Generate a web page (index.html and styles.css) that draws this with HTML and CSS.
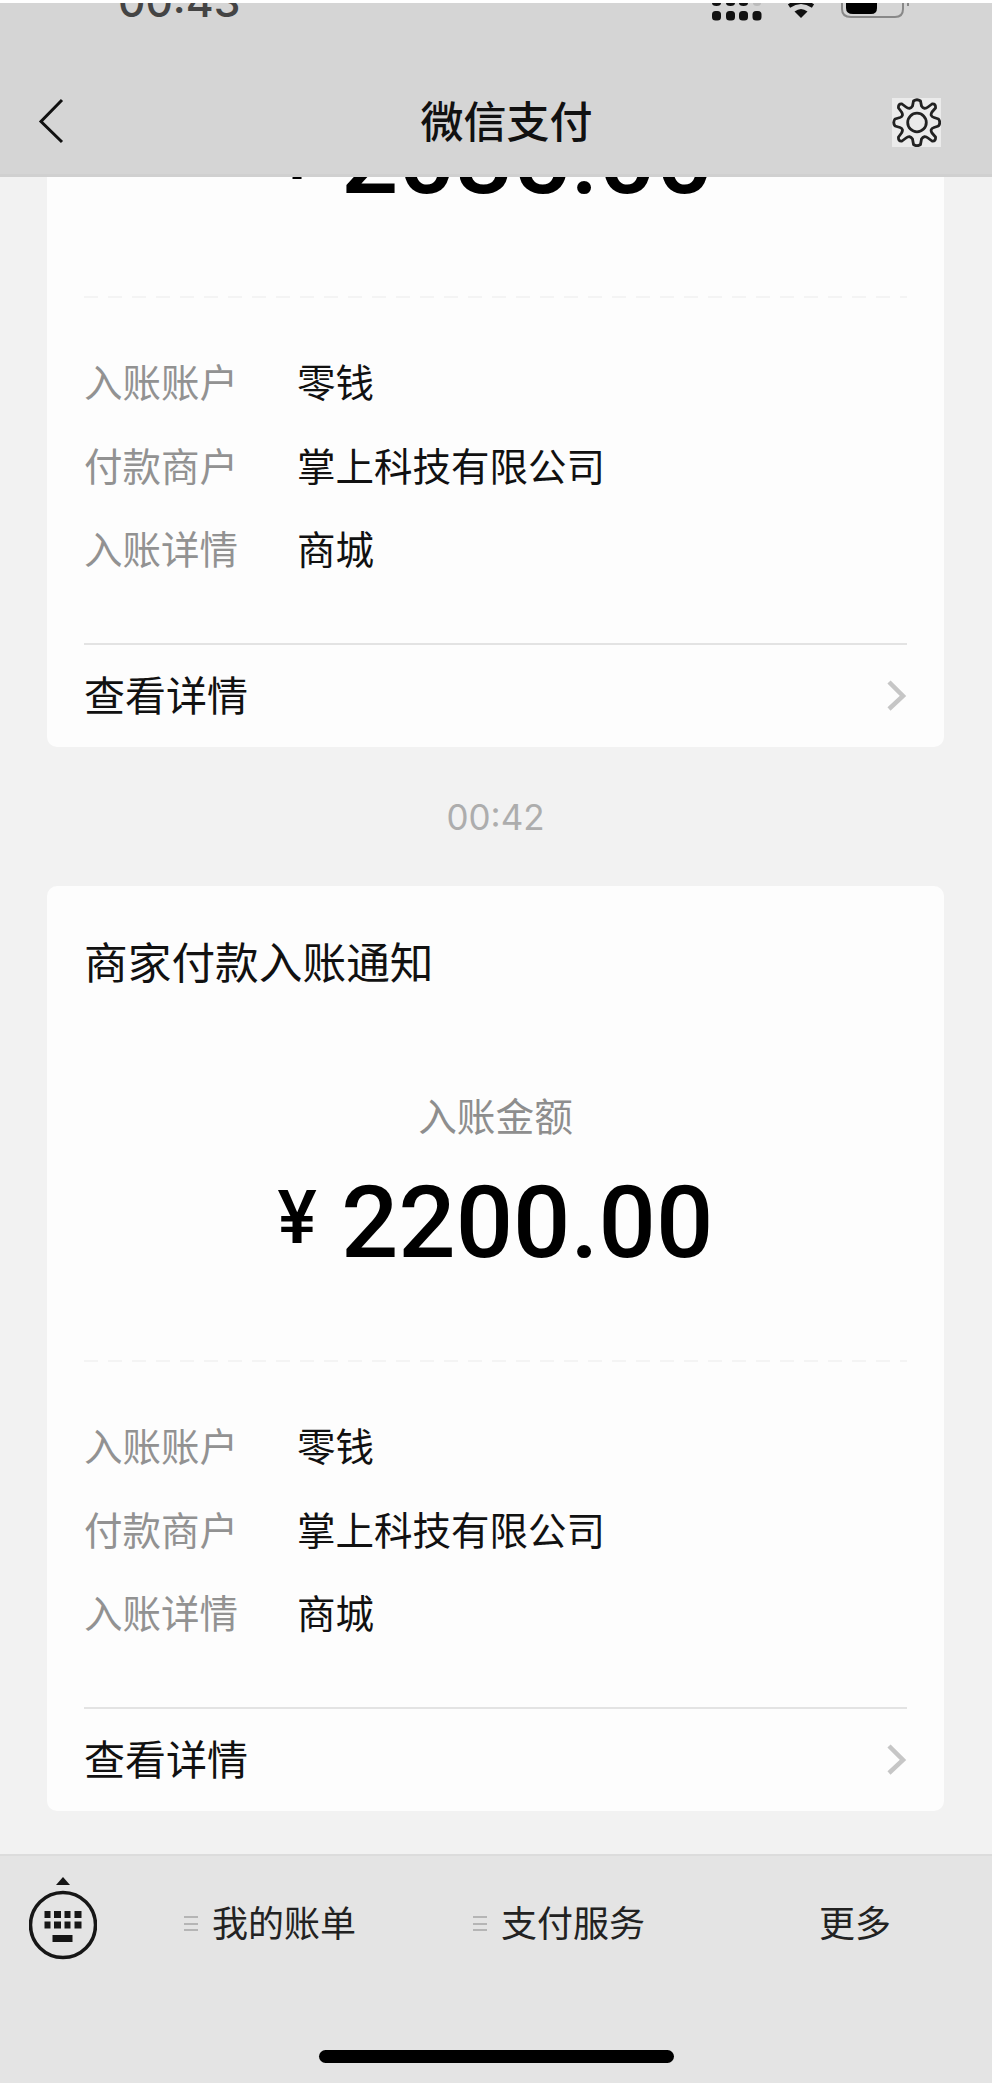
FILE: index.html
```
<!DOCTYPE html>
<html lang="zh-CN">
<head>
<meta charset="utf-8">
<title>微信支付</title>
<link rel="stylesheet" href="styles.css">
</head>
<body>
<div class="phone">
  <header class="header">
    <div class="status">
      <span class="clock">00:43</span>
      <svg class="status-icons" width="210" height="24" viewBox="0 0 210 24">
        <g fill="#111">
          <path d="M2 0h9a4.500 3 0 0 1-9 0zM16 0h9a4.500 3 0 0 1-9 0zM29 0h9a4.500 3 0 0 1-9 0z"/>
          <path d="M43 0h8a4 3 0 0 1-8 0z" fill="#bbb"/>
          <rect x="2" y="8" width="9" height="9.500" rx="3.500"/><rect x="16" y="8" width="9" height="9.500" rx="3.500"/><rect x="29" y="8" width="9" height="9.500" rx="3.500"/><rect x="42.500" y="8" width="9" height="9.500" rx="3.500"/>
          <path d="M91 15l-6.500-6.500q6.500-5 13 0z"/>
        </g>
        <path d="M79 3Q91-5 103 3" fill="none" stroke="#111" stroke-width="4"/>
        <path d="M132-8V6q0 8 9 8h44q8 0 8-8V-8" fill="none" stroke="#888" stroke-width="2"/>
        <path d="M136-8V5q0 6 7 6h18q6 0 6-6V-8z" fill="#000"/>
        <path d="M198-3v6" stroke="#888" stroke-width="2"/>
      </svg>
    </div>
    <div class="navbar">
      <svg class="back" width="26" height="48" viewBox="0 0 26 48"><path d="M24 3L3 24.500L24 45" fill="none" stroke="#111" stroke-width="3"/></svg>
      <h1 class="nav-title">微信支付</h1>
      <svg class="gear" width="49" height="49" viewBox="0 0 49 49">
        <rect width="49" height="49" fill="#ebebeb"/>
        <g fill="none" stroke="#222" stroke-width="2.800" stroke-linejoin="round">
          <path d="M21.500 3Q25 .5 28.500 3L29.500 8Q32 12 36 9L40 6Q44 5.500 43.500 10L40 14Q37.500 18 42 19.500L46.500 21Q49 24.500 46.500 28L42 29.500Q37.500 31 40 35L43.500 39Q44 43.500 40 43L36 40Q32 37 29.500 41L28.500 46.500Q25 49 21.500 46.500L20.500 41Q18 37 14 40L10 43Q6 43.500 6.500 39L9.500 35Q12 31 8 29.500L3 28Q.5 24.500 3 21L8 19.500Q12 18 9.500 14L6.500 10Q6 5.500 10 6L14 9Q18 12 20.500 8Z"/>
          <circle cx="25" cy="24.500" r="9.300"/>
        </g>
      </svg>
    </div>
  </header>

  <main class="messages">
    <section class="card">
      <h2 class="card-title">商家付款入账通知</h2>
      <p class="amount-label">入账金额</p>
      <p class="amount"><span class="yen">¥</span><span class="number">2035.00</span></p>
      <div class="dashed"></div>
      <dl class="details">
        <dt>入账账户</dt><dd>零钱</dd>
        <dt>付款商户</dt><dd>掌上科技有限公司</dd>
        <dt>入账详情</dt><dd>商城</dd>
      </dl>
      <a class="more"><span>查看详情</span><svg width="21" height="34" viewBox="0 0 21 34"><path d="M3 3L17 17L3 30" fill="none" stroke="#c6c6c6" stroke-width="4.500"/></svg></a>
    </section>

    <time class="timestamp">00:42</time>

    <section class="card">
      <h2 class="card-title">商家付款入账通知</h2>
      <p class="amount-label">入账金额</p>
      <p class="amount"><span class="yen">¥</span><span class="number">2200.00</span></p>
      <div class="dashed"></div>
      <dl class="details">
        <dt>入账账户</dt><dd>零钱</dd>
        <dt>付款商户</dt><dd>掌上科技有限公司</dd>
        <dt>入账详情</dt><dd>商城</dd>
      </dl>
      <a class="more"><span>查看详情</span><svg width="21" height="34" viewBox="0 0 21 34"><path d="M3 3L17 17L3 30" fill="none" stroke="#c6c6c6" stroke-width="4.500"/></svg></a>
    </section>
  </main>

  <footer class="footer">
    <nav class="menu">
      <svg class="keyboard" width="68" height="84" viewBox="0 0 68 84">
        <g fill="#161616">
          <path d="M27 9L34 1L41 9z"/>
          <path d="M15.500 35h6v7h-6zM25 35h7v7h-7zM35.500 35h6v7h-6zM45.500 35h7v7h-7zM15.500 45.500h6v7h-6zM25 45.500h7v7h-7zM35.500 45.500h6v7h-6zM45.500 45.500h7v7h-7zM23.500 59h20v7h-20z"/>
        </g>
        <circle cx="34" cy="49" r="32.500" fill="none" stroke="#161616" stroke-width="3.500"/>
      </svg>
      <div class="menu-item first"><i class="lines"></i><span>我的账单</span></div>
      <div class="menu-item second"><i class="lines"></i><span>支付服务</span></div>
      <div class="menu-item third"><span>更多</span></div>
    </nav>
    <div class="home-bar"></div>
  </footer>
</div>
</body>
</html>
```
FILE: styles.css
```
* { box-sizing: border-box; }

body {
  margin: 0;
  background: #fff;
  color: #111;
  font-family: "Noto Sans CJK SC", sans-serif;
}

h1, h2, p, dl, dd { margin: 0; font-weight: 400; }
svg { display: block; flex: none; }

.phone {
  display: flex;
  flex-direction: column;
  width: 992px;
  height: 2091px;
  padding: 3px 0 8px;
}

.header {
  flex: none;
  height: 174px;
  background: #d5d5d5;
  border-bottom: 3px solid #d0d0d0;
}

.status {
  display: flex;
  justify-content: space-between;
  height: 60px;
  padding: 0 72px 0 118px;
  overflow: hidden;
}

.clock {
  margin-top: -26px;
  height: 50px;
  font: 500 42.500px/50px Inter, sans-serif;
  color: #444;
}

.navbar {
  display: grid;
  grid-template-columns: 1fr auto 1fr;
  align-items: center;
  height: 116px;
  padding: 0 51px 0 38px;
}

.nav-title {
  padding: 0 0 5px 34px;
  font-size: 43px;
  font-weight: 500;
  line-height: 60px;
}

.gear { justify-self: end; margin-top: 3px; }

.messages {
  display: flex;
  flex-direction: column;
  justify-content: flex-end;
  flex: 1;
  min-height: 0;
  padding: 0 48px 43px 47px;
  overflow: hidden;
  background: #f2f2f2;
}

.card {
  flex: none;
  height: 925px;
  padding: 48px 37px 0 37px;
  border-radius: 10px;
  background: #fdfdfd;
}

.card-title { font-size: 43.700px; line-height: 52px; }

.amount-label {
  margin-top: 102px;
  font-size: 38.700px;
  line-height: 52px;
  text-align: center;
  color: #8e8e8e;
}

.amount {
  display: flex;
  justify-content: center;
  gap: 24px;
  margin-top: 33px;
  height: 100px;
  font-family: Roboto, sans-serif;
  font-weight: 500;
  line-height: 100px;
  color: #000;
}

.number { font-size: 101px; }
.yen { font-size: 74px; line-height: 90px; }

.dashed {
  height: 2px;
  margin-top: 87px;
  background: repeating-linear-gradient(90deg, #f4f4f4 0 14px, #fdfdfd 14px 24px);
}

.details {
  display: grid;
  grid-template-columns: 213px 1fr;
  grid-auto-rows: 83.500px;
  margin-top: 41px;
  font-size: 38.500px;
  line-height: 83.500px;
}

.details dt { color: #929292; }

.more {
  display: flex;
  justify-content: space-between;
  align-items: center;
  height: 104px;
  margin-top: 53px;
  border-top: 2px solid #e3e3e3;
  font-size: 41px;
}

.more span { padding-bottom: 6px; }

.timestamp {
  flex: none;
  height: 139px;
  font: 400 35px/140px Inter, sans-serif;
  text-align: center;
  color: #adadad;
}

.footer {
  display: flex;
  flex-direction: column;
  justify-content: space-between;
  align-items: center;
  flex: none;
  height: 229px;
  padding-bottom: 20px;
  border-top: 2px solid #dcdcdc;
  background: #e4e4e4;
}

.menu {
  display: flex;
  align-items: center;
  width: 100%;
  height: 134px;
  padding-left: 29px;
}

.keyboard { margin-top: -11px; }

.menu-item {
  display: flex;
  align-items: center;
  gap: 14px;
  font-size: 36px;
  color: #222;
}

.menu-item span { padding-bottom: 5px; }

.first { margin-left: 87px; }
.second { margin-left: 117px; }
.third { margin-left: 174px; }

.lines {
  width: 14px;
  height: 15px;
  background: repeating-linear-gradient(#b5b5b5 0 2px, transparent 2px 6.500px);
}

.home-bar {
  width: 355px;
  height: 13px;
  border-radius: 7px;
  background: #000;
}
```
